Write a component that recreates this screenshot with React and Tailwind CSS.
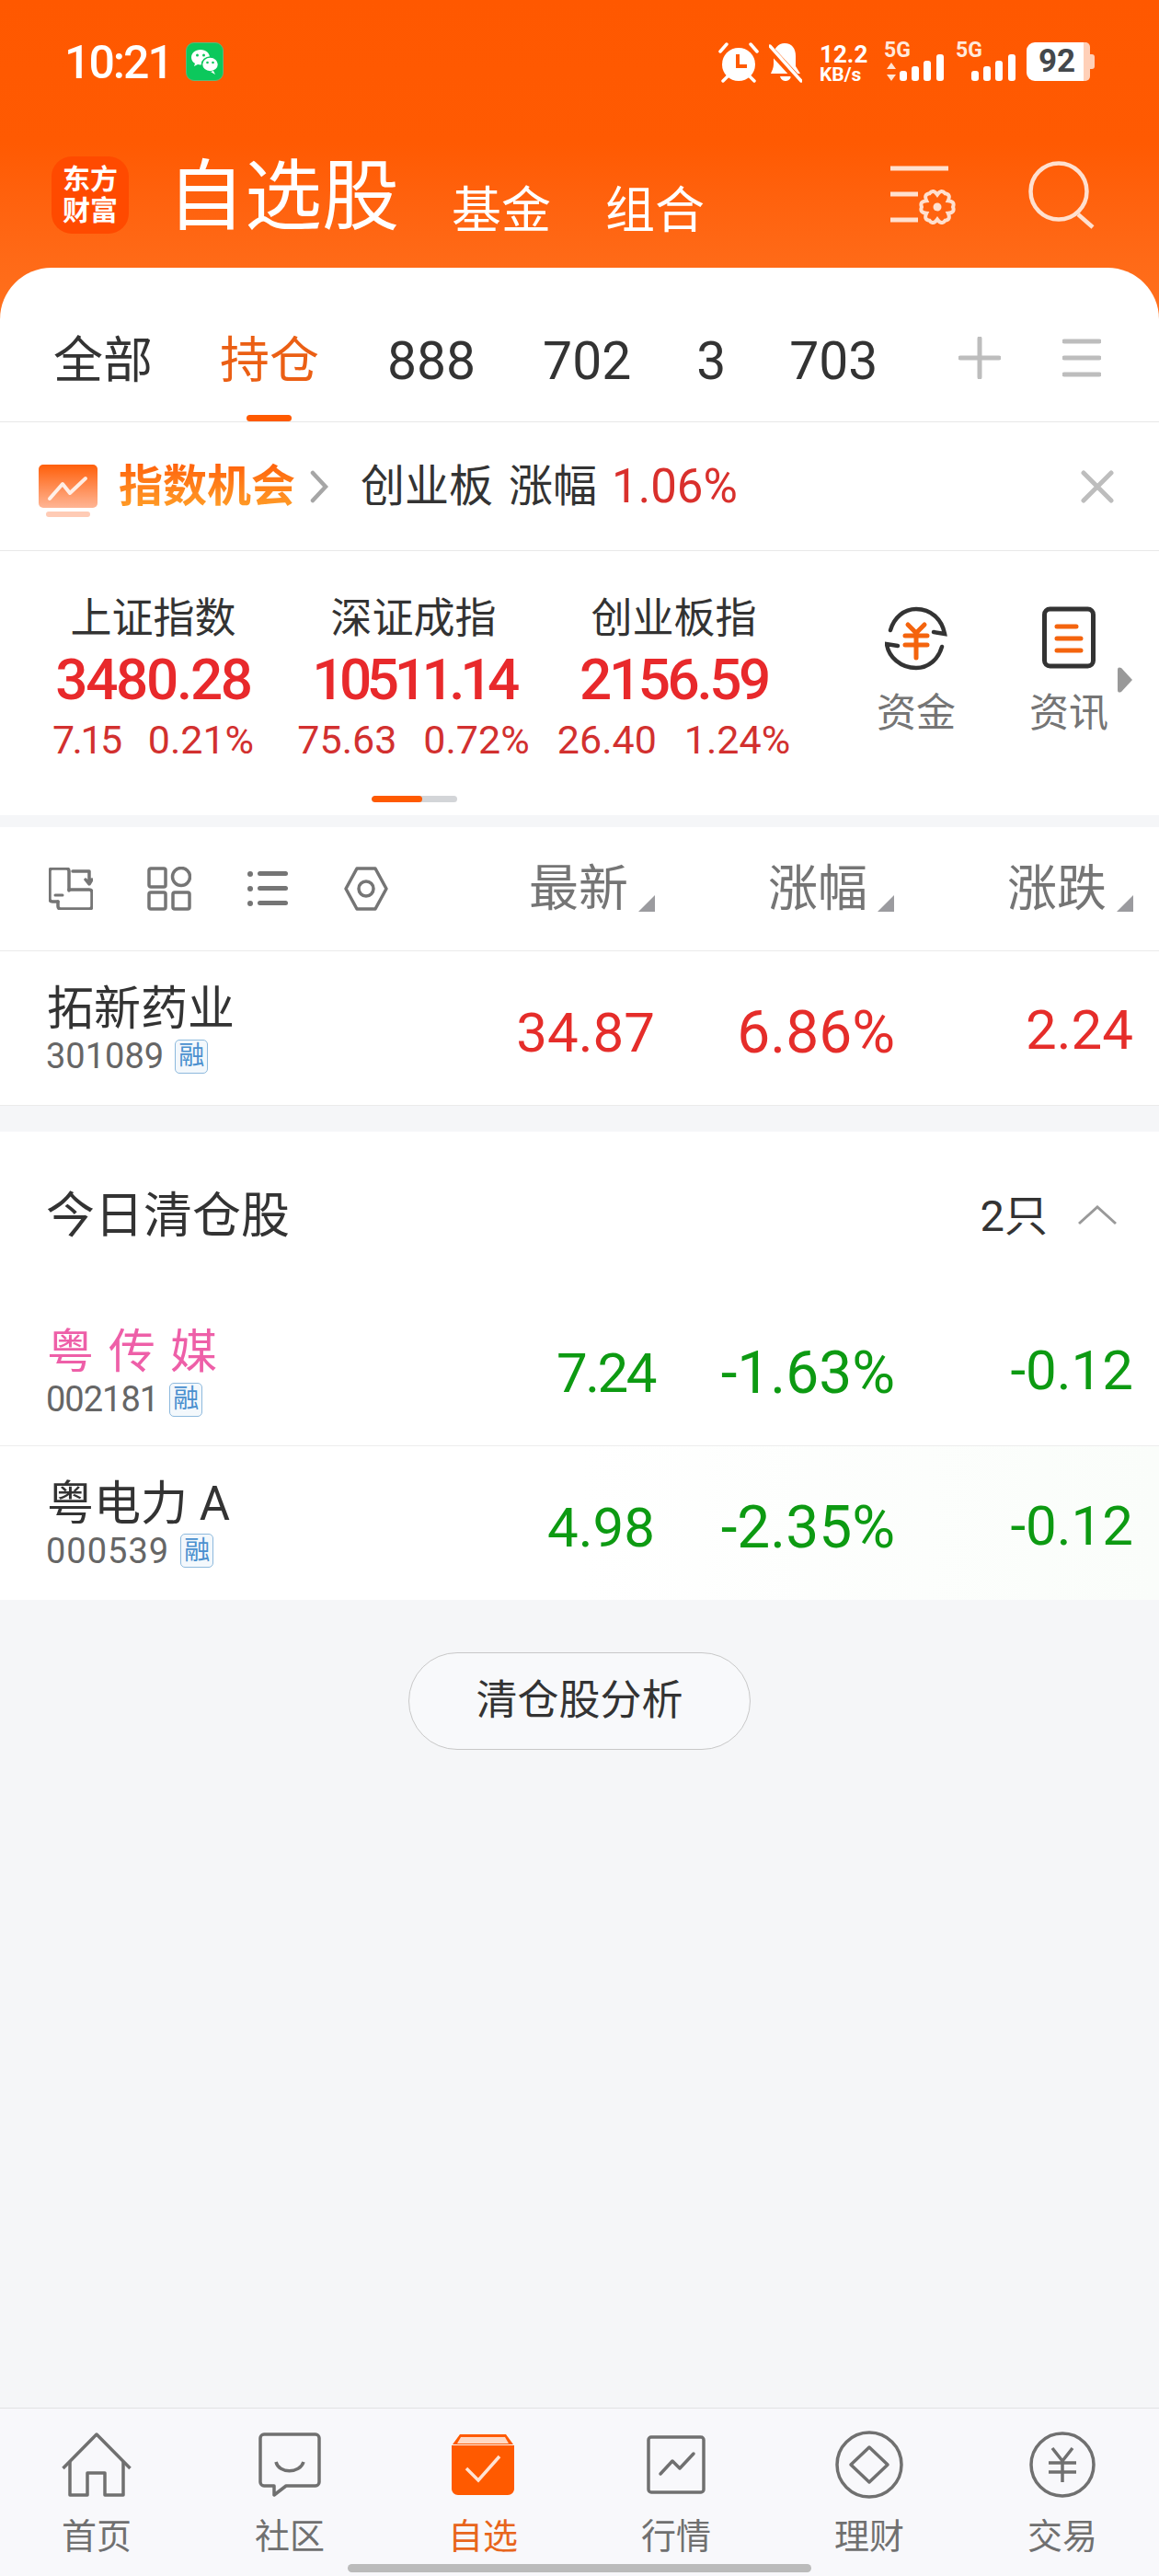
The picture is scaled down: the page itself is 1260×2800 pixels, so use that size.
import React from "react";

const gearPath = (() => {
  const cx = 18, cy = 18, n = 6;
  let d = "";
  for (let i = 0; i < n; i++) {
    const a = (i / n) * Math.PI * 2 + Math.PI / 6;
    const b = ((i + 0.5) / n) * Math.PI * 2 + Math.PI / 6;
    const c = ((i + 1) / n) * Math.PI * 2 + Math.PI / 6;
    const p = (r, t) => `${(cx + r * Math.cos(t)).toFixed(2)} ${(cy + r * Math.sin(t)).toFixed(2)}`;
    if (i === 0) d += `M${p(13.5, a)}`;
    d += ` Q${p(20.5, b - 0.3)} ${p(17, b)} Q${p(20.5, b + 0.3)} ${p(13.5, c)}`;
  }
  return d + "Z";
})();

function Signal({ arrows }) {
  return (
    <div className="relative w-[65px] h-[42px]">
      <span className="absolute left-0 top-[-3px] text-[23px] leading-[24px] font-bold text-[#ffe9dc]">5G</span>
      {arrows && (
        <svg className="absolute left-[2px] bottom-[0px]" width="12" height="20" viewBox="0 0 12 20">
          <path d="M6 0L11 7H1ZM6 20L1 13H11Z" fill="#ffe3d3" />
        </svg>
      )}
      <svg className="absolute right-0 bottom-0" width="48" height="29" viewBox="0 0 48 29">
        <rect x="0" y="18" width="8" height="11" rx="3" fill="#fff" />
        <rect x="13" y="13" width="8" height="16" rx="3" fill="#fff" />
        <rect x="26" y="7" width="8" height="22" rx="3" fill="#fff" />
        <rect x="40" y="0" width="8" height="29" rx="3" fill="#fff" />
      </svg>
    </div>
  );
}

function Badge() {
  return (
    <span className="ml-[12px] w-[36px] h-[37px] flex items-center justify-center rounded-[5px] border border-[#8db9dd] bg-[#f3f8fc] text-[28px] leading-[28px] text-[#4a90cf]">
      融
    </span>
  );
}

function Tri() {
  return (
    <svg className="ml-[11px] mb-[1px]" width="18" height="18" viewBox="0 0 18 18">
      <path d="M18 0V18H0Z" fill="#9b9b9f" />
    </svg>
  );
}

function HeadCell({ label }) {
  return (
    <div className="w-[260px] flex justify-end items-end text-[54px] leading-[54px] text-[#757575]">
      <span className="-mb-[2px]">{label}</span>
      <Tri />
    </div>
  );
}

function Row({ name, nameClass, code, codeClass, leftClass, numClass, firstClass, values, color, extra, h }) {
  return (
    <div className={`flex items-center pl-[50px] pr-[28px] ${h} ${extra}`}>
      <div className={`flex-1 flex flex-col ${leftClass}`}>
        <div className={`pl-[1px] h-[54px] leading-[54px] text-[51px] ${nameClass}`}>{name}</div>
        <div className="flex items-center h-[40px] mt-[4px] text-[38px] leading-[40px] text-[#666666]">
          <span className={codeClass}>{code}</span>
          <Badge />
        </div>
      </div>
      <div className={`flex items-center ${numClass} ${color}`}>
        <div className={`w-[257px] text-right text-[60px] leading-[64px] ${firstClass}`}>{values[0]}</div>
        <div className="w-[261px] text-right text-[64px] leading-[64px]">{values[1]}</div>
        <div className="w-[259px] text-right text-[60px] leading-[64px] -mt-[5px]">{values[2]}</div>
      </div>
    </div>
  );
}

function Index({ name, value, valueClass, a, aClass, b, gap }) {
  return (
    <div className="w-[283px] flex flex-col items-center">
      <div className="text-[45px] leading-[50px] text-[#333333]">{name}</div>
      <div className={`mt-[10px] text-[62px] leading-[62px] font-medium text-[#e8292b] ${valueClass}`}>{value}</div>
      <div className={`mt-[12px] flex text-[43px] leading-[44px] text-[#d2302f] ${gap}`}>
        <span className={aClass}>{a}</span>
        <span>{b}</span>
      </div>
    </div>
  );
}

function NavItem({ label, active, children }) {
  return (
    <div className="flex flex-col items-center">
      <div className="h-[86px] flex items-center justify-center">{children}</div>
      <div className={`mt-[14px] text-[38px] leading-[42px] ${active ? "text-[#e8651c]" : "text-[#707070]"}`}>{label}</div>
    </div>
  );
}

export default function App() {
  return (
    <div className="relative w-[1260px] h-[2800px] overflow-hidden bg-[#f5f6f8] flex flex-col font-[Roboto,'Noto_Sans_CJK_SC',sans-serif]">
      {/* Orange header */}
      <div className="h-[347px] shrink-0 bg-linear-to-b from-[#ff5800] via-[#ff5a02] via-45% to-[#ff711e] flex flex-col">
        <div className="h-[88px] pt-[46px] shrink-0 flex items-start pl-[70px] pr-[70px] box-content">
          <span className="w-[112px] text-[50px] leading-[44px] tracking-[-2px] font-medium text-white">10:21</span>
          <div className="ml-[20px] w-[41px] h-[42px] rounded-[9px] bg-[#0cc85c] border border-[#5cb878] flex items-center justify-center">
            <svg width="31" height="29" viewBox="0 0 31 29">
              <path d="M11 1C5 1 1 5 1 9.500C1 12 2.500 14.500 5 16L4 19L8 17C9 17.300 10 17.500 11 17.500C17 17.500 21 14 21 9.500C21 5 17 1 11 1Z" fill="#fff" />
              <ellipse cx="21.500" cy="17" rx="9" ry="8" fill="#fff" stroke="#0cc85c" strokeWidth="1.500" />
              <path d="M25 24L27 28L22 25Z" fill="#fff" />
              <circle cx="7.500" cy="7" r="1.500" fill="#0cc85c" />
              <circle cx="14.500" cy="7" r="1.500" fill="#0cc85c" />
              <circle cx="18.500" cy="15" r="1.300" fill="#0cc85c" />
              <circle cx="24.500" cy="15" r="1.300" fill="#0cc85c" />
            </svg>
          </div>
          <div className="flex-1" />
          <svg width="44" height="44" viewBox="0 0 44 44">
            <circle cx="22" cy="24" r="18" fill="#fff" />
            <path d="M21 13V26H31" stroke="#ff5a00" strokeWidth="4" fill="none" />
            <path d="M2 10L9 2M42 10L35 2M5 42L10 37M39 42L34 37" stroke="#fff" strokeWidth="3.500" strokeLinecap="round" />
          </svg>
          <svg className="ml-[11px]" width="36" height="44" viewBox="0 0 36 44">
            <path d="M17 1C25 1 29 7 29 15V26L34 34H2C3 31 5 28 5 24V14C5 7 10 1 17 1Z" fill="#fff" />
            <path d="M12 37H24C23 41 20 42 18 42C16 42 13 41 12 37Z" fill="#fff" />
            <path d="M0 6L35 44" stroke="#ff5a00" strokeWidth="8" />
            <path d="M1 4L35 42" stroke="#fff" strokeWidth="3.500" strokeLinecap="round" />
          </svg>
          <div className="ml-[19px] w-[52px] flex flex-col font-bold text-white">
            <span className="text-[26px] leading-[26px]">12.2</span>
            <span className="text-[21px] leading-[18px] whitespace-nowrap">KB/s</span>
          </div>
          <div className="ml-[18px]"><Signal arrows /></div>
          <div className="ml-[13px]"><Signal /></div>
          <div className="ml-[12px] relative w-[74px] h-[42px] flex">
            <div className="w-[62px] h-[42px] rounded-l-[9px] bg-white" />
            <div className="w-[7px] h-[42px] rounded-r-[5px] bg-[#ffd0b8]" />
            <div className="w-[5px] h-[16px] mt-[13px] rounded-r-[3px] bg-[#ffd0b8]" />
            <span className="absolute left-[13px] top-0 text-[35px] leading-[42px] font-bold text-[#44484c]">92</span>
          </div>
        </div>

        <div className="mt-[36px] flex items-start pl-[56px] pr-[70px]">
          <div className="w-[84px] h-[84px] rounded-[22px] bg-[#ff4a00] flex flex-col items-center justify-center font-bold text-white text-[30px] leading-[34px]">
            <span>东方</span>
            <span>财富</span>
          </div>
          <span className="ml-[42px] mt-[3px] w-[246px] text-[84px] leading-[84px] whitespace-nowrap text-white">自选股</span>
          <span className="ml-[63px] mt-[32px] text-[54px] leading-[56px] text-white">基金</span>
          <span className="ml-[59px] mt-[32px] text-[54px] leading-[56px] text-white">组合</span>
          <div className="flex-1" />
          <svg className="mt-[10px]" width="72" height="64" viewBox="0 0 72 64">
            <path d="M0 3H63M0 31H30M0 59H30" stroke="#ffe0cf" strokeWidth="5" />
            <g transform="translate(33 27)">
              <path d={gearPath} fill="none" stroke="#ffe0cf" strokeWidth="4" />
              <circle cx="18" cy="18" r="4.500" fill="#ffe0cf" />
            </g>
          </svg>
          <svg className="ml-[78px] mt-[5px]" width="72" height="74" viewBox="0 0 72 74">
            <circle cx="33" cy="33" r="30.500" fill="none" stroke="#ffe0cf" strokeWidth="4.500" />
            <path d="M54 58L70 72" stroke="#ffe0cf" strokeWidth="4.500" />
          </svg>
        </div>
      </div>

      {/* Tabs */}
      <div className="-mt-[56px] relative h-[168px] shrink-0 rounded-t-[56px] bg-white border-b border-[#e8e8e8] flex items-start pt-[73px] pl-[58px] text-[54px] leading-[58px] text-[#333333]">
        <span>全部</span>
        <div className="relative ml-[73px]">
          <span className="text-[#eb5f14]">持仓</span>
          <div className="absolute left-[29px] top-[87px] w-[49px] h-[7px] rounded-full bg-[#ff5a00]" />
        </div>
        <span className="ml-[74px] text-[57px]">888</span>
        <span className="ml-[73px] text-[57px]">702</span>
        <span className="ml-[71px] text-[57px]">3</span>
        <span className="ml-[69px] text-[57px]">703</span>
        <div className="flex-1" />
        <svg className="mt-[2px]" width="46" height="46" viewBox="0 0 46 46">
          <path d="M23 2V44M2 23H44" stroke="#bdbdbd" strokeWidth="5" strokeLinecap="round" />
        </svg>
        <svg className="ml-[67px] mr-[63px] mt-[4px]" width="42" height="42" viewBox="0 0 42 42">
          <path d="M2 3H40M2 21H40M2 39H40" stroke="#bdbdbd" strokeWidth="5" strokeLinecap="round" />
        </svg>
      </div>

      {/* Opportunity banner */}
      <div className="h-[140px] shrink-0 bg-white border-b border-[#e8e8e8] flex items-center pl-[42px] pr-[49px]">
        <svg width="64" height="58" viewBox="0 0 64 58" className="mt-[10px]">
          <defs>
            <linearGradient id="oppo" x1="0" y1="0" x2="0" y2="1">
              <stop offset="0" stopColor="#ff5f0a" />
              <stop offset="1" stopColor="#ffb595" />
            </linearGradient>
          </defs>
          <rect x="0" y="0" width="64" height="47" rx="5" fill="url(#oppo)" />
          <rect x="8" y="51" width="48" height="6" rx="3" fill="#ffcbb5" />
          <path d="M12 37L26 21L34 31L51 15" stroke="#fff" strokeOpacity="0.85" strokeWidth="4" fill="none" strokeLinecap="round" strokeLinejoin="round" />
        </svg>
        <span className="ml-[23px] text-[48px] leading-[54px] font-bold text-transparent bg-clip-text bg-linear-to-b from-[#ff5f0a] to-[#ffa028]">指数机会</span>
        <svg className="ml-[16px]" width="20" height="36" viewBox="0 0 20 36">
          <path d="M3 3L17 18L3 33" stroke="#a6a6a6" strokeWidth="4.500" fill="none" strokeLinecap="round" />
        </svg>
        <span className="ml-[35px] text-[48px] leading-[54px] text-[#333333]">创业板</span>
        <span className="ml-[17px] text-[48px] leading-[54px] text-[#333333]">涨幅</span>
        <span className="ml-[16px] text-[51px] leading-[54px] text-[#d9302c]">1.06%</span>
        <div className="flex-1" />
        <svg width="36" height="36" viewBox="0 0 36 36">
          <path d="M3 3L33 33M33 3L3 33" stroke="#bdbdbd" strokeWidth="5" strokeLinecap="round" />
        </svg>
      </div>

      {/* Indices */}
      <div className="relative h-[287px] shrink-0 bg-white flex items-start pt-[49px] pl-[25px]">
        <Index name="上证指数" value="3480.28" valueClass="tracking-[-2.3px]" a="7.15" aClass="tracking-[-2.5px]" b="0.21%" gap="gap-[30px]" />
        <Index name="深证成指" value="10511.14" valueClass="tracking-[-5.4px]" a="75.63" b="0.72%" gap="gap-[29px]" />
        <Index name="创业板指" value="2156.59" valueClass="tracking-[-3.4px]" a="26.40" b="1.24%" gap="gap-[30px]" />
        <div className="ml-[39px] w-[166px] flex flex-col items-center mt-[11px]">
          <svg width="68" height="70" viewBox="0 0 68 70">
            <path d="M6 26C10 12 21 3 34 3C50 3 62 14 65 30L53 28" fill="none" stroke="#333" strokeWidth="4.500" strokeLinecap="round" />
            <path d="M62 44C58 58 47 67 34 67C17 67 4 55 2 41L14 43" fill="none" stroke="#333" strokeWidth="4.500" strokeLinecap="round" />
            <path d="M25 22L34 31L43 22M22 34H46M22 44H46M34 31V58" fill="none" stroke="#f4640e" strokeWidth="5" strokeLinecap="round" transform="translate(0 -2)" />
          </svg>
          <span className="mt-[22px] text-[43px] leading-[48px] text-[#757575]">资金</span>
        </div>
        <div className="w-[166px] flex flex-col items-center mt-[11px]">
          <svg width="58" height="70" viewBox="0 0 58 70">
            <rect x="2.500" y="3" width="53" height="62" rx="6" fill="none" stroke="#333" strokeWidth="5" />
            <path d="M16 22H37M16 35H42M16 48H42" stroke="#f4640e" strokeWidth="5" strokeLinecap="round" />
          </svg>
          <span className="mt-[22px] text-[43px] leading-[48px] text-[#757575]">资讯</span>
        </div>
        <svg className="absolute left-[1214px] top-[126px]" width="18" height="28" viewBox="0 0 18 28">
          <path d="M1 3C1 0 3 0 5 1L17 14L5 27C3 28 1 28 1 25Z" fill="#999" />
        </svg>
        <div className="absolute left-[404px] top-[266px] w-[93px] h-[7px] rounded-full bg-[#d3d5d8] overflow-hidden">
          <div className="w-[55px] h-[7px] rounded-full bg-[#ff5a00]" />
        </div>
      </div>

      {/* Sheet header */}
      <div className="mt-[13px] h-[135px] shrink-0 bg-white border-b border-[#ebebeb] flex items-center pl-[53px] pr-[28px]">
        <svg width="48" height="46" viewBox="0 0 48 46" fill="none" stroke="#757575" strokeWidth="3.500" strokeLinejoin="round" strokeLinecap="round">
          <path d="M10 37H4C2 37 1 36 1 34V4C1 2 2 1 4 1H19C21 1 22 2 22 4V25" />
          <path d="M7 30H15" strokeWidth="3" />
          <path d="M22 24H44C46 24 47 25 47 27V42C47 44 46 45 44 45H13C11 45 10 44 10 42V37" />
          <path d="M26 4H44V17M40 13L44 18L47 13" />
        </svg>
        <svg className="ml-[59px]" width="48" height="48" viewBox="0 0 48 48" fill="none" stroke="#757575" strokeWidth="3.500">
          <rect x="2" y="2" width="18" height="20" rx="2" />
          <circle cx="37" cy="11" r="9.500" />
          <rect x="2" y="28" width="18" height="18" rx="2" />
          <rect x="28" y="28" width="18" height="18" rx="2" />
        </svg>
        <svg className="ml-[61px]" width="44" height="40" viewBox="0 0 44 40" fill="#757575">
          <circle cx="3" cy="4" r="3" />
          <circle cx="3" cy="20" r="3" />
          <circle cx="3" cy="36" r="3" />
          <rect x="11" y="1" width="33" height="5" rx="2.500" />
          <rect x="11" y="17" width="33" height="5" rx="2.500" />
          <rect x="11" y="33" width="33" height="5" rx="2.500" />
        </svg>
        <svg className="ml-[61px]" width="48" height="48" viewBox="0 0 48 48" fill="none" stroke="#757575" strokeWidth="3.500" strokeLinejoin="round">
          <path d="M14 2H34L46 24L34 46H14L2 24Z" />
          <circle cx="24" cy="24" r="8" />
        </svg>
        <div className="flex-1" />
        <HeadCell label="最新" />
        <HeadCell label="涨幅" />
        <HeadCell label="涨跌" />
      </div>

      {/* Holding */}
      <Row
        name="拓新药业"
        nameClass="text-[#333333]"
        code="301089"
        codeClass=""
        leftClass="mt-[3px]"
        numClass="mt-[10px]"
        firstClass=""
        values={["34.87", "6.86%", "2.24"]}
        color="text-[#e52d2a]"
        extra="bg-white border-b border-[#ebebeb]"
        h="h-[168px] shrink-0"
      />

      {/* Cleared today */}
      <div className="mt-[28px] shrink-0 bg-white flex flex-col">
        <div className="h-[184px] flex items-start pt-[63px] pl-[50px] pr-[46px] text-[53px] leading-[58px] text-[#333333]">
          <span>今日清仓股</span>
          <div className="flex-1" />
          <span className="text-[47px]">2只</span>
          <svg className="ml-[33px] mt-[17px]" width="42" height="22" viewBox="0 0 42 22">
            <path d="M1 20L21 2L41 20" stroke="#999" strokeWidth="3" fill="none" />
          </svg>
        </div>
        <Row
          name="粤传媒"
          nameClass="text-[#ee5fa8] tracking-[16px]"
          code="002181"
          codeClass="tracking-[-1px]"
          leftClass="-mt-[1px]"
          numClass=""
          firstClass="tracking-[-2.5px]"
          values={["7.24", "-1.63%", "-0.12"]}
          color="text-[#0d9a12]"
          extra="border-b border-[#ededed]"
          h="h-[158px]"
        />
        <Row
          name="粤电力 A"
          nameClass="text-[#333333]"
          code="000539"
          codeClass="tracking-[1px]"
          leftClass="mt-[2px]"
          numClass="mt-[11px]"
          firstClass=""
          values={["4.98", "-2.35%", "-0.12"]}
          color="text-[#0d9a12]"
          extra="bg-linear-to-r from-white via-white to-[#fafdfa]"
          h="h-[167px]"
        />
      </div>

      {/* Analyse button */}
      <div className="mt-[57px] flex justify-center shrink-0">
        <div className="w-[372px] h-[106px] rounded-full border border-[#c8c8c8] bg-[#f8f9fb] flex items-center justify-center text-[45px] text-[#333333]">
          清仓股分析
        </div>
      </div>

      <div className="flex-1" />

      {/* Bottom navigation */}
      <div className="h-[183px] shrink-0 bg-[#f8f8fb] border-t border-[#e2e2e4] grid grid-cols-6 pt-[18px]">
        <NavItem label="首页">
          <svg width="76" height="70" viewBox="0 0 76 70" fill="none" stroke="#707070" strokeWidth="3.500" strokeLinejoin="round">
            <path d="M1.500 39L38 2L74.500 39" />
            <path d="M9 32V68H28V44H47V68H67V32" />
          </svg>
        </NavItem>
        <NavItem label="社区">
          <svg width="68" height="70" viewBox="0 0 68 70" fill="none" stroke="#707070" strokeWidth="3.500" strokeLinejoin="round">
            <path d="M6 2H62C64 2 66 4 66 6V54C66 56 64 58 62 58H30L17 68V58H6C4 58 2 56 2 54V6C2 4 4 2 6 2Z" />
            <path d="M19 32C22 45 45 45 49 32" strokeLinecap="butt" />
          </svg>
        </NavItem>
        <NavItem label="自选" active>
          <svg width="68" height="68" viewBox="0 0 68 68">
            <path d="M1 12L9 1H59L67 12H1Z" fill="#ff5a00" />
            <path d="M10 4H58L62 11H6Z" fill="#ffd9c4" />
            <path d="M0 13H68V60C68 64 65 67 61 67H7C3 67 0 64 0 60Z" fill="#ff5a00" />
            <path d="M16 38L29 51L52 25" stroke="#ffe3d3" strokeWidth="3.500" fill="none" />
          </svg>
        </NavItem>
        <NavItem label="行情">
          <svg width="64" height="64" viewBox="0 0 64 64" fill="none" stroke="#707070" strokeWidth="3.500" strokeLinejoin="round">
            <rect x="2" y="2" width="60" height="60" rx="3" />
            <path d="M15 42L28 28L36 36L51 20" strokeLinecap="round" />
          </svg>
        </NavItem>
        <NavItem label="理财">
          <svg width="74" height="74" viewBox="0 0 74 74" fill="none" stroke="#707070" strokeWidth="3.500" strokeLinejoin="round">
            <circle cx="37" cy="37" r="35" />
            <path d="M37 18L57 37L37 56L17 37Z" />
          </svg>
        </NavItem>
        <NavItem label="交易">
          <svg width="72" height="72" viewBox="0 0 72 72" fill="none" stroke="#707070" strokeWidth="3.500">
            <circle cx="36" cy="36" r="34" />
            <path d="M25 18L36 32L47 18M21 34H51M21 44H51M36 32V55" strokeWidth="3.500" />
          </svg>
        </NavItem>
      </div>

      <div className="absolute left-[378px] top-[2787px] w-[504px] h-[9px] rounded-full bg-[#bbbbbb]" />
    </div>
  );
}
